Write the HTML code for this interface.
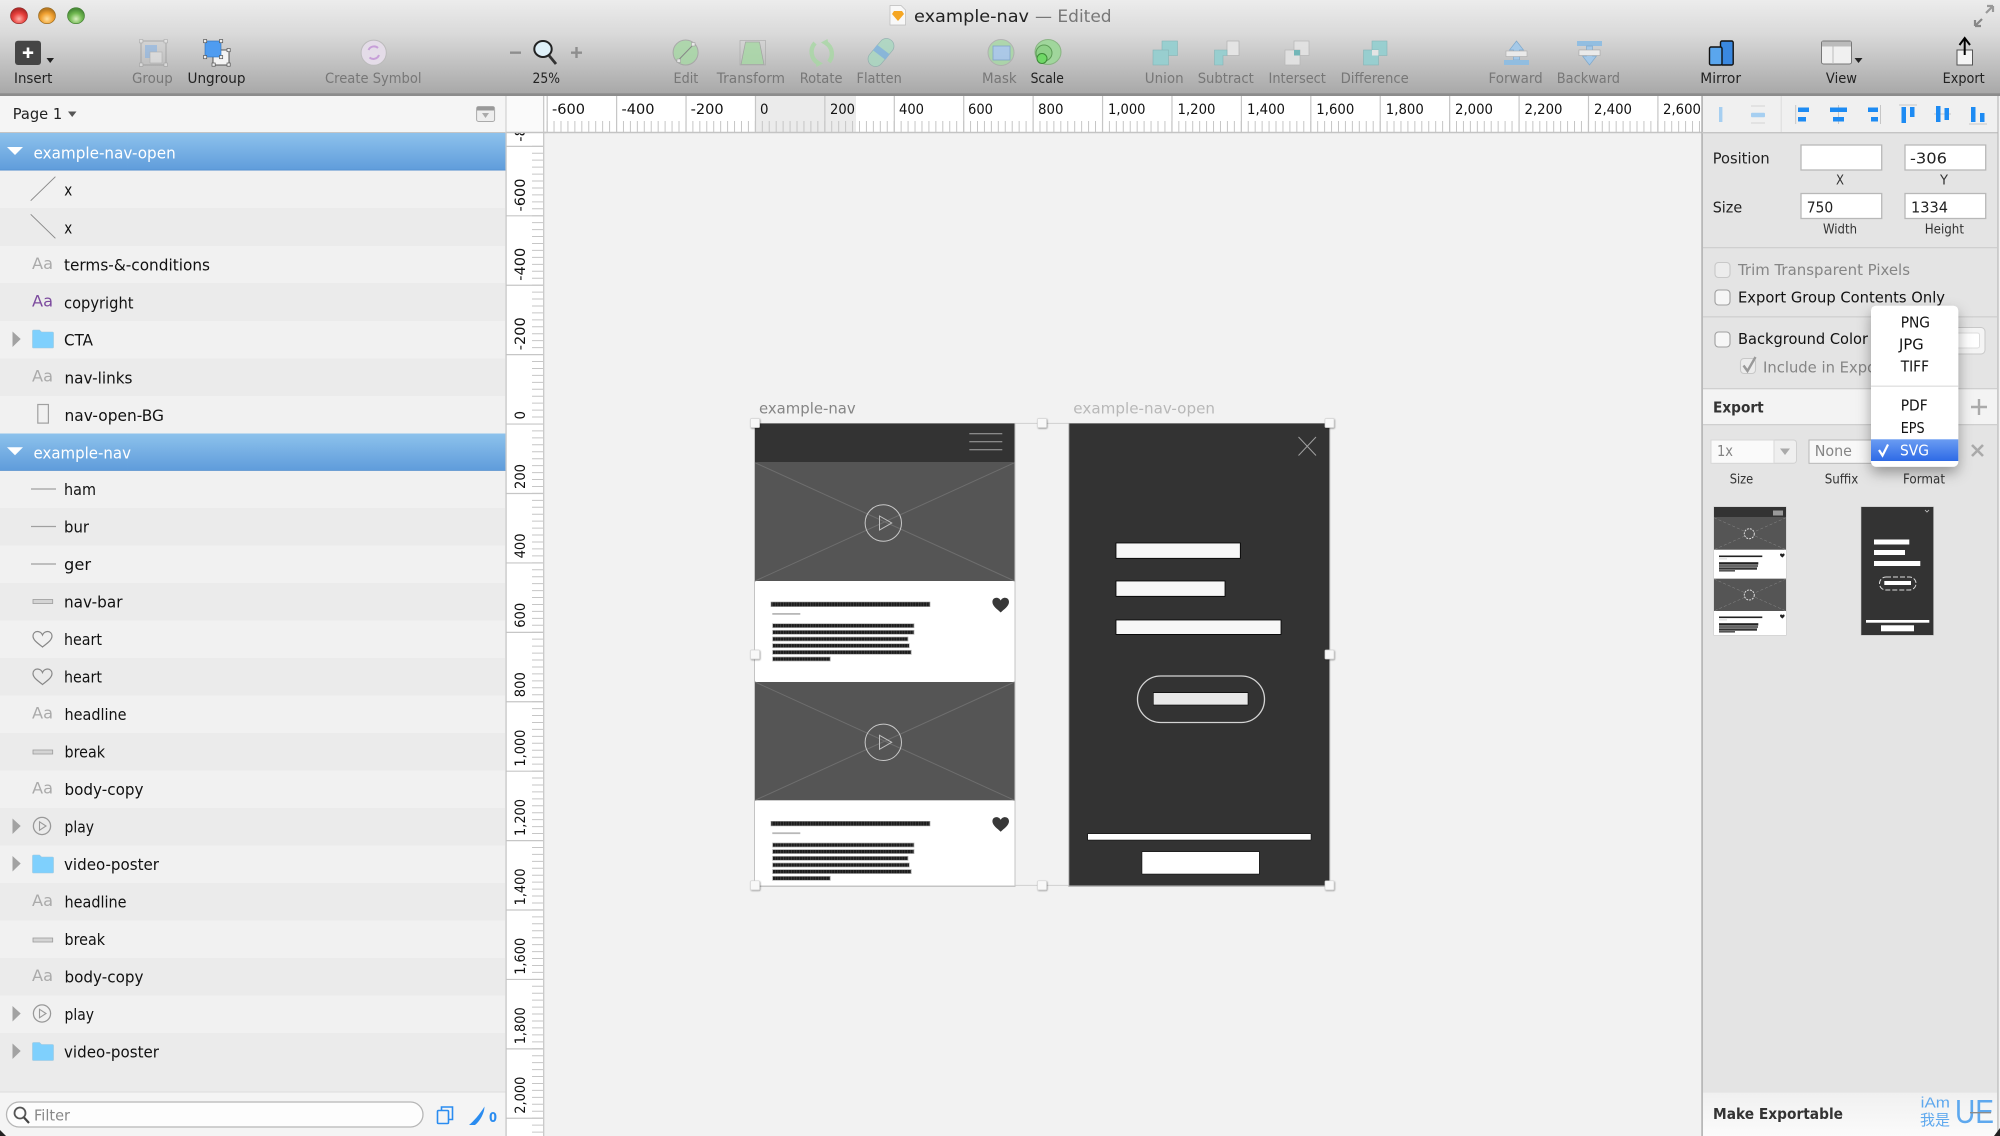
<!DOCTYPE html>
<html><head><meta charset="utf-8"><title>example-nav</title>
<style>
html,body{margin:0;padding:0;background:#f2f2f2;width:2000px;height:1136px;overflow:hidden}
svg{display:block;position:absolute;left:0;top:0;filter:blur(.35px)}
text{font-family:"DejaVu Sans","Liberation Sans",sans-serif;white-space:pre}
.l{font-size:16px;fill:#111}
.h{font-size:16px;fill:#fff}
.a{font-size:16px;fill:#aaa}
.tb{font-size:14px;fill:#777}
.te{font-size:14px;fill:#222}
.r{font-size:14px;fill:#111}
.p{font-size:15px;fill:#222}
.s{font-size:13px;fill:#333}
.g{font-size:15px;fill:#858585}
.b{font-size:15px;font-weight:bold;fill:#333}
.m{font-size:15px;fill:#111}
</style></head><body>
<svg xmlns="http://www.w3.org/2000/svg" width="2000" height="1136" viewBox="0 0 2000 1136">
<defs>
<linearGradient id="tbg" x1="0" y1="0" x2="0" y2="1"><stop offset="0" stop-color="#ececec"/><stop offset=".35" stop-color="#dadada"/><stop offset="1" stop-color="#a8a8a8"/></linearGradient>
<linearGradient id="hdr" x1="0" y1="0" x2="0" y2="1"><stop offset="0" stop-color="#8dc2ec"/><stop offset="1" stop-color="#5f9cdb"/></linearGradient>
<linearGradient id="sel" x1="0" y1="0" x2="0" y2="1"><stop offset="0" stop-color="#6a9cf2"/><stop offset="1" stop-color="#2e6ae6"/></linearGradient>
<linearGradient id="exp" x1="0" y1="0" x2="0" y2="1"><stop offset="0" stop-color="#f0f0f0"/><stop offset="1" stop-color="#fbfbfb"/></linearGradient>
<radialGradient id="rd" cx=".5" cy=".7" r=".6"><stop offset="0" stop-color="#ffb0a8"/><stop offset=".6" stop-color="#e8403c"/><stop offset="1" stop-color="#b42a28"/></radialGradient>
<radialGradient id="or" cx=".5" cy=".7" r=".6"><stop offset="0" stop-color="#ffe0a0"/><stop offset=".6" stop-color="#f0a030"/><stop offset="1" stop-color="#b87820"/></radialGradient>
<radialGradient id="gr" cx=".5" cy=".7" r=".6"><stop offset="0" stop-color="#d8f0c0"/><stop offset=".6" stop-color="#70b850"/><stop offset="1" stop-color="#4a8c38"/></radialGradient>
<filter id="ms" x="-30%" y="-20%" width="160%" height="150%"><feDropShadow dx="0" dy="6" stdDeviation="7" flood-color="#000" flood-opacity=".35"/></filter>
<filter id="hs" x="-50%" y="-50%" width="200%" height="200%"><feDropShadow dx=".6" dy=".8" stdDeviation=".9" flood-color="#000" flood-opacity=".4"/></filter>
<pattern id="st" width="2.7" height="6" patternUnits="userSpaceOnUse"><rect width="2.7" height="6" fill="#1c1c1c"/><rect width=".6" height="6" fill="#4c4c4c"/></pattern>
<path id="heart" d="M0 7.5C-3 4.5-8.3 1.2-8.3-3C-8.3-5.8-6.3-7.2-4.2-7.2C-2.2-7.2-.9-6-0-4.5C.9-6 2.2-7.2 4.2-7.2C6.3-7.2 8.3-5.8 8.3-3C8.3 1.2 3 4.5 0 7.5Z"/>
<g id="aa"><text class="a" x="32" y="0" textLength="21" lengthAdjust="spacingAndGlyphs">Aa</text></g>
<g id="fold"><path d="M32.5 11a1 1 0 0 1 1-1h6l2 2h11a1 1 0 0 1 1 1v14a1 1 0 0 1-1 1h-19a1 1 0 0 1-1-1z" fill="#7fd0fd" stroke="#9cc8e0" stroke-width=".6"/></g>
<path id="arr" d="M12.5 10.5L20.7 18L12.5 26Z" fill="#a2a2a2"/>
<g id="pl"><circle cx="42" cy="18" r="8.6" fill="none" stroke="#999" stroke-width="1.3"/><path d="M39.5 13.8L46 18L39.5 22.2Z" fill="none" stroke="#999" stroke-width="1.1"/></g>
<path id="hl" d="M42.5 26.5C40 24 33 20.5 33 15.5C33 12.8 35 11 37.3 11C39.4 11 41.6 12.3 42.5 14.5C43.4 12.3 45.6 11 47.7 11C50 11 52 12.8 52 15.5C52 20.5 45 24 42.5 26.5Z" fill="none" stroke="#888" stroke-width="1.2"/>
<rect id="hd" x="-4.5" y="-4.5" width="9" height="9" rx="1" fill="#f8f8f8" stroke="#d4d4d4" stroke-width=".7" filter="url(#hs)"/>
<g id="txt">
<rect x="771" y="602" width="159" height="4.6" fill="url(#st)" stroke="#999" stroke-width=".6"/>
<rect x="772.3" y="613" width="28" height="1.8" fill="#b8b8b8"/>
<g fill="url(#st)" stroke="#b0b0b0" stroke-width=".7">
<rect x="772.6" y="623.7" width="141.4" height="4"/>
<rect x="772.6" y="630.3" width="141.4" height="4"/>
<rect x="772.6" y="637" width="135.4" height="4"/>
<rect x="772.6" y="643.7" width="136.7" height="4"/>
<rect x="772.6" y="650.3" width="138.7" height="4"/>
<rect x="772.6" y="657" width="57.7" height="4"/>
</g>
<use href="#heart" x="1000.7" y="605" fill="#383838"/>
</g>
<g id="vid">
<rect x="755" y="462.7" width="259.5" height="118.3" fill="#555"/>
<path d="M755 462.7L1014.5 581M1014.5 462.7L755 581" stroke="#6e6e6e" stroke-width="1" fill="none"/>
<circle cx="883.3" cy="523" r="18.2" fill="#555" fill-opacity="0" stroke="#c8c8c8" stroke-width="1"/>
<path d="M879.5 516L891.7 523L879.5 530Z" fill="none" stroke="#c0c0c0" stroke-width="1"/>
</g>
<g id="tv">
<rect x="0" y="0" width="72" height="32" fill="#555"/>
<path d="M0 0L72 32M72 0L0 32" stroke="#888" stroke-width=".5" stroke-dasharray="3 2"/>
<circle cx="35.3" cy="16" r="5" fill="#555" stroke="#ddd" stroke-width="1" stroke-dasharray="2 1"/>
</g>
<g id="tw">
<rect x="5" y="5.5" width="43.3" height="1.6" fill="#222"/>
<rect x="5" y="8.5" width="8" height=".8" fill="#ccc"/>
<rect x="5" y="12.2" width="39.3" height="2.3" fill="#222"/>
<rect x="5" y="14.8" width="39" height="2.3" fill="#666"/>
<rect x="5" y="17.4" width="38" height="2.3" fill="#333"/>
<rect x="5" y="20" width="16" height="1.6" fill="#555"/>
<use href="#heart" transform="translate(68.3,5.5) scale(.28)" fill="#222"/>
</g>
</defs>

<!-- base -->
<rect width="2000" height="1136" fill="#f2f2f2"/>

<!-- horizontal ruler -->
<rect x="506" y="96" width="1196" height="37" fill="#fff"/>
<rect x="755" y="96" width="101" height="36" fill="#ebebeb"/>
<line x1="546.6" y1="126.5" x2="1701" y2="126.5" stroke="#c6c6c6" stroke-width="11" stroke-dasharray="1 5.942"/>
<line x1="546.6" y1="114" x2="1701" y2="114" stroke="#c6c6c6" stroke-width="36" stroke-dasharray="1.2 68.22"/>
<line x1="506" y1="132.5" x2="1702" y2="132.5" stroke="#c4c4c4" stroke-width="1.4"/>
<g>
<text class="r" x="552" y="114" textLength="33" lengthAdjust="spacingAndGlyphs">-600</text>
<text class="r" x="621.5" y="114" textLength="33" lengthAdjust="spacingAndGlyphs">-400</text>
<text class="r" x="690.7" y="114" textLength="33" lengthAdjust="spacingAndGlyphs">-200</text>
<text class="r" x="760" y="114" textLength="8.5" lengthAdjust="spacingAndGlyphs">0</text>
<text class="r" x="830" y="114" textLength="25" lengthAdjust="spacingAndGlyphs">200</text>
<text class="r" x="899" y="114" textLength="25" lengthAdjust="spacingAndGlyphs">400</text>
<text class="r" x="968" y="114" textLength="25" lengthAdjust="spacingAndGlyphs">600</text>
<text class="r" x="1038" y="114" textLength="25.5" lengthAdjust="spacingAndGlyphs">800</text>
<text class="r" x="1108" y="114" textLength="37.5" lengthAdjust="spacingAndGlyphs">1,000</text>
<text class="r" x="1177.5" y="114" textLength="38" lengthAdjust="spacingAndGlyphs">1,200</text>
<text class="r" x="1247" y="114" textLength="38" lengthAdjust="spacingAndGlyphs">1,400</text>
<text class="r" x="1316.3" y="114" textLength="38" lengthAdjust="spacingAndGlyphs">1,600</text>
<text class="r" x="1385.8" y="114" textLength="38" lengthAdjust="spacingAndGlyphs">1,800</text>
<text class="r" x="1455" y="114" textLength="38" lengthAdjust="spacingAndGlyphs">2,000</text>
<text class="r" x="1524.5" y="114" textLength="38" lengthAdjust="spacingAndGlyphs">2,200</text>
<text class="r" x="1594" y="114" textLength="38" lengthAdjust="spacingAndGlyphs">2,400</text>
<text class="r" x="1663" y="114" textLength="38" lengthAdjust="spacingAndGlyphs">2,600</text>
</g>

<!-- vertical ruler -->
<rect x="506" y="133" width="37.5" height="1003" fill="#fff"/>
<line x1="537.5" y1="145.8" x2="537.5" y2="1136" stroke="#c6c6c6" stroke-width="11" stroke-dasharray="1 5.942"/>
<line x1="524.5" y1="145.8" x2="524.5" y2="1136" stroke="#c6c6c6" stroke-width="37" stroke-dasharray="1.2 68.22"/>
<line x1="543.7" y1="133" x2="543.7" y2="1136" stroke="#c4c4c4" stroke-width="1.2"/>
<line x1="506" y1="133" x2="506" y2="1136" stroke="#c4c4c4" stroke-width="1.4"/>
<text class="r" transform="translate(525,141.8) rotate(-90)" textLength="33" lengthAdjust="spacingAndGlyphs">-800</text>
<text class="r" transform="translate(525,211.5) rotate(-90)" textLength="33" lengthAdjust="spacingAndGlyphs">-600</text>
<text class="r" transform="translate(525,280.8) rotate(-90)" textLength="33" lengthAdjust="spacingAndGlyphs">-400</text>
<text class="r" transform="translate(525,350.2) rotate(-90)" textLength="33" lengthAdjust="spacingAndGlyphs">-200</text>
<text class="r" transform="translate(525,419.5) rotate(-90)" textLength="8.5" lengthAdjust="spacingAndGlyphs">0</text>
<text class="r" transform="translate(525,489) rotate(-90)" textLength="25" lengthAdjust="spacingAndGlyphs">200</text>
<text class="r" transform="translate(525,558.4) rotate(-90)" textLength="25" lengthAdjust="spacingAndGlyphs">400</text>
<text class="r" transform="translate(525,627.8) rotate(-90)" textLength="25" lengthAdjust="spacingAndGlyphs">600</text>
<text class="r" transform="translate(525,697.2) rotate(-90)" textLength="25" lengthAdjust="spacingAndGlyphs">800</text>
<text class="r" transform="translate(525,766.6) rotate(-90)" textLength="37" lengthAdjust="spacingAndGlyphs">1,000</text>
<text class="r" transform="translate(525,836) rotate(-90)" textLength="37" lengthAdjust="spacingAndGlyphs">1,200</text>
<text class="r" transform="translate(525,905.4) rotate(-90)" textLength="37" lengthAdjust="spacingAndGlyphs">1,400</text>
<text class="r" transform="translate(525,974.8) rotate(-90)" textLength="37" lengthAdjust="spacingAndGlyphs">1,600</text>
<text class="r" transform="translate(525,1044.3) rotate(-90)" textLength="37" lengthAdjust="spacingAndGlyphs">1,800</text>
<text class="r" transform="translate(525,1113.7) rotate(-90)" textLength="37" lengthAdjust="spacingAndGlyphs">2,000</text>
<!-- top-left ruler corner covers the clipped -800 label -->
<rect x="506.7" y="96" width="36.5" height="36.3" fill="#fafafa"/>
<line x1="506" y1="132.5" x2="546" y2="132.5" stroke="#c4c4c4" stroke-width="1.4"/>
<line x1="543.7" y1="96" x2="543.7" y2="133" stroke="#c4c4c4" stroke-width="1.2"/>

<!-- artboards -->
<text class="g" x="759" y="413.3" textLength="96.7" lengthAdjust="spacingAndGlyphs">example-nav</text>
<text class="g" x="1073.3" y="413.3" textLength="141.7" lengthAdjust="spacingAndGlyphs" style="fill:#b8b8b8">example-nav-open</text>
<path d="M1014 423.4H1070M1014 885.4H1070" stroke="#cfcfcf" stroke-width="1"/>
<rect x="754" y="423" width="261.5" height="464" fill="#c4c4c4"/>
<rect x="755" y="423.5" width="259.5" height="462" fill="#fff"/>
<rect x="755" y="423.5" width="259.5" height="39.2" fill="#333"/>
<path d="M969.3 433.7H1002.3M969.3 441.7H1002.3M969.3 449.7H1002.3" stroke="#a4a4a4" stroke-width="1"/>
<use href="#vid"/>
<use href="#vid" y="219.3"/>
<use href="#txt"/>
<use href="#txt" y="219.3"/>

<rect x="1068.3" y="423" width="262" height="464" fill="#bcbcbc"/>
<rect x="1069.3" y="423.5" width="260" height="462" fill="#333"/>
<path d="M1298.5 437L1316 455.5M1316 437L1298.5 455.5" stroke="#a0a0a0" stroke-width="1" fill="none"/>
<g fill="#f7f7f7" stroke="#000" stroke-width=".8">
<rect x="1116" y="543" width="124.3" height="15.3"/>
<rect x="1116" y="581" width="109" height="15.3"/>
<rect x="1116" y="620" width="165" height="14.4"/>
</g>
<rect x="1137.5" y="676" width="127" height="46.5" rx="23.2" fill="none" stroke="#d4d4d4" stroke-width="1.3"/>
<rect x="1153.3" y="692.7" width="94.7" height="12.3" fill="#e8e8e8" stroke="#000" stroke-width=".6"/>
<rect x="1087.7" y="833.7" width="223.3" height="6.3" fill="#fff" stroke="#000" stroke-width=".5"/>
<rect x="1142" y="851.7" width="117.3" height="22.3" fill="#fff" stroke="#000" stroke-width=".5"/>
<use href="#hd" x="755" y="423"/><use href="#hd" x="1042" y="423"/><use href="#hd" x="1329.5" y="423"/>
<use href="#hd" x="755" y="654.5"/><use href="#hd" x="1329.5" y="654.5"/>
<use href="#hd" x="755" y="885.3"/><use href="#hd" x="1042" y="885.3"/><use href="#hd" x="1329.5" y="885.3"/>

<!-- layers panel -->
<rect x="0" y="96" width="505.4" height="37" fill="#f5f5f5"/>
<line x1="506" y1="96" x2="506" y2="133" stroke="#c9c9c9" stroke-width="1"/>
<text class="p" x="12.7" y="119" textLength="49.5" lengthAdjust="spacingAndGlyphs">Page 1</text>
<path d="M68 111.5H76.5L72.2 117Z" fill="#555"/>
<rect x="476.6" y="106.5" width="18" height="15" rx="2" fill="#eee" stroke="#aaa"/>
<rect x="477" y="107" width="17" height="3.5" fill="#999"/>
<path d="M482 113H489L485.5 118Z" fill="#aaa"/>
<rect x="0" y="132" width="505.4" height="1" fill="#c4c4c4"/>
<rect x="0" y="133" width="505.4" height="959" fill="#f1f1f1"/>
<g fill="#ebebeb">
<rect y="208" width="505.4" height="38"/><rect y="283" width="505.4" height="38"/><rect y="358.5" width="505.4" height="37.5"/>
<rect y="508" width="505.4" height="37.5"/><rect y="583" width="505.4" height="37.5"/><rect y="658" width="505.4" height="37.5"/><rect y="733" width="505.4" height="37.5"/><rect y="808" width="505.4" height="37.5"/><rect y="883" width="505.4" height="37.5"/><rect y="958" width="505.4" height="37.5"/><rect y="1033" width="505.4" height="59"/>
</g>
<rect y="133" width="505.4" height="37.5" fill="url(#hdr)"/>
<rect y="433.5" width="505.4" height="37" fill="url(#hdr)"/>
<rect y="169.7" width="505.4" height=".8" fill="#4f8ccd"/><rect y="470" width="505.4" height=".8" fill="#4f8ccd"/>
<path d="M7 147H23L15 155Z" fill="#fff"/><path d="M7 447.2H23L15 455.2Z" fill="#fff"/>
<text class="h" x="33.5" y="158.5" textLength="142.2" lengthAdjust="spacingAndGlyphs">example-nav-open</text>
<text class="h" x="33.5" y="458.4" textLength="97.5" lengthAdjust="spacingAndGlyphs">example-nav</text>

<!-- rows group 1 -->
<path d="M30.7 200.7L55.4 176.7M30.7 214.3L55.4 238.3" stroke="#8a8a8a" stroke-width="1" fill="none"/>
<text class="l" x="64.3" y="195.7" textLength="8" lengthAdjust="spacingAndGlyphs">x</text>
<text class="l" x="64.3" y="233.3" textLength="8" lengthAdjust="spacingAndGlyphs">x</text>
<use href="#aa" y="269"/><text class="l" x="64" y="270.5" textLength="146" lengthAdjust="spacingAndGlyphs">terms-&amp;-conditions</text>
<text x="32" y="306.5" font-size="16" fill="#7c4a9e" textLength="21" lengthAdjust="spacingAndGlyphs">Aa</text><text class="l" x="64" y="308.3" textLength="69.5" lengthAdjust="spacingAndGlyphs">copyright</text>
<use href="#arr" y="321"/><use href="#fold" y="320"/><text class="l" x="64" y="345.5" textLength="29" lengthAdjust="spacingAndGlyphs">CTA</text>
<use href="#aa" y="381.5"/><text class="l" x="64.5" y="383.4" textLength="68" lengthAdjust="spacingAndGlyphs">nav-links</text>
<rect x="37.8" y="404.5" width="10.6" height="18.6" fill="none" stroke="#a0a0a0" stroke-width="1.2"/><text class="l" x="64.5" y="420.9" textLength="99.5" lengthAdjust="spacingAndGlyphs">nav-open-BG</text>

<!-- rows group 2 -->
<path d="M31 489H56M31 526.5H56M31 564H56" stroke="#a0a0a0" stroke-width="1.2" fill="none"/>
<text class="l" x="64" y="495.2" textLength="32" lengthAdjust="spacingAndGlyphs">ham</text>
<text class="l" x="64" y="532.7" textLength="25" lengthAdjust="spacingAndGlyphs">bur</text>
<text class="l" x="64" y="570.2" textLength="27" lengthAdjust="spacingAndGlyphs">ger</text>
<rect x="33" y="599.5" width="19.7" height="4" fill="#d4d4d4" stroke="#9c9c9c" stroke-width=".8"/>
<text class="l" x="64" y="607.7" textLength="58.5" lengthAdjust="spacingAndGlyphs">nav-bar</text>
<use href="#hl" y="620.5"/><text class="l" x="64" y="645.2" textLength="38" lengthAdjust="spacingAndGlyphs">heart</text>
<use href="#hl" y="658"/><text class="l" x="64" y="682.7" textLength="38" lengthAdjust="spacingAndGlyphs">heart</text>
<use href="#aa" y="718.5"/><text class="l" x="64.5" y="720.2" textLength="62" lengthAdjust="spacingAndGlyphs">headline</text>
<rect x="33" y="750" width="19.7" height="4" fill="#d4d4d4" stroke="#9c9c9c" stroke-width=".8"/>
<text class="l" x="64.5" y="757.7" textLength="40.5" lengthAdjust="spacingAndGlyphs">break</text>
<use href="#aa" y="793.5"/><text class="l" x="64.5" y="795.2" textLength="79" lengthAdjust="spacingAndGlyphs">body-copy</text>
<use href="#arr" y="808"/><use href="#pl" y="808"/><text class="l" x="64.5" y="832.7" textLength="29.5" lengthAdjust="spacingAndGlyphs">play</text>
<use href="#arr" y="845.5"/><use href="#fold" y="845"/><text class="l" x="64" y="870.2" textLength="95" lengthAdjust="spacingAndGlyphs">video-poster</text>
<use href="#aa" y="906"/><text class="l" x="64.5" y="907.7" textLength="62" lengthAdjust="spacingAndGlyphs">headline</text>
<rect x="33" y="938" width="19.7" height="4" fill="#d4d4d4" stroke="#9c9c9c" stroke-width=".8"/>
<text class="l" x="64.5" y="945.2" textLength="40.5" lengthAdjust="spacingAndGlyphs">break</text>
<use href="#aa" y="981"/><text class="l" x="64.5" y="982.7" textLength="79" lengthAdjust="spacingAndGlyphs">body-copy</text>
<use href="#arr" y="995.5"/><use href="#pl" y="995.5"/><text class="l" x="64.5" y="1020.2" textLength="29.5" lengthAdjust="spacingAndGlyphs">play</text>
<use href="#arr" y="1033"/><use href="#fold" y="1032.5"/><text class="l" x="64" y="1057.7" textLength="95" lengthAdjust="spacingAndGlyphs">video-poster</text>

<!-- filter bar -->
<rect x="0" y="1092" width="505.4" height="44" fill="#f4f4f4"/>
<rect x="0" y="1091.5" width="505.4" height="1" fill="#dcdcdc"/>
<rect x="6.5" y="1102" width="416.5" height="25" rx="12.5" fill="#fdfdfd" stroke="#b6b6b6" stroke-width="1.3"/>
<circle cx="20" cy="1113" r="5.5" fill="none" stroke="#555" stroke-width="1.8"/>
<path d="M24 1117.5L29 1123" stroke="#444" stroke-width="2.2"/>
<text x="34" y="1120.7" font-size="15" fill="#888" textLength="36" lengthAdjust="spacingAndGlyphs">Filter</text>
<rect x="437.5" y="1110.5" width="11" height="13" rx="1" fill="none" stroke="#2a8cf0" stroke-width="1.6"/>
<path d="M441.5 1110V1107H452.5V1119.5H449" fill="none" stroke="#2a8cf0" stroke-width="1.6"/>
<path d="M469 1125C473 1122 480 1114 484.5 1106.5C484.5 1113 480 1121 475 1125Z" fill="#2a8cf0"/>
<text x="489" y="1122" font-size="13" font-weight="bold" fill="#2a8cf0" textLength="8" lengthAdjust="spacingAndGlyphs">0</text>
<path d="M0 1136V1130L6 1136Z" fill="#222"/>

<!-- right panel -->
<rect x="1702" y="96" width="298" height="1040" fill="#e4e4e4"/>
<rect x="1702" y="96" width="298" height="36.5" fill="#f0f0f0"/>
<rect x="1701.2" y="96" width="1.8" height="1040" fill="#b8b8b8"/>
<rect x="1702" y="132" width="296" height="1.4" fill="#c4c4c4"/>
<rect x="1780.7" y="96" width="1" height="36" fill="#dcdcdc"/>
<rect x="1997.5" y="96" width="1" height="1040" fill="#b0b0b0"/>
<rect x="1998.5" y="96" width="1.5" height="1040" fill="#f2f2f2"/>

<!-- align icons -->
<rect x="1719" y="107" width="3.4" height="15" fill="#a6cff1"/>
<path d="M1751 106H1765M1751 123H1765" stroke="#d4d4d4" stroke-width="1"/>
<rect x="1751" y="112.7" width="14" height="4.5" rx="1" fill="#a6cff1"/>
<g stroke="#c6c6c6" stroke-width="1" fill="none">
<path d="M1795.7 105V124M1838.5 105V124M1880.5 105V124M1899 105H1917M1934 114H1951M1969 124H1987"/>
</g>
<g fill="#1d8bf3">
<rect x="1798" y="107.5" width="11" height="4.5"/><rect x="1798" y="117" width="8" height="4.5"/>
<rect x="1830" y="107.5" width="17" height="4.5"/><rect x="1833" y="117" width="11" height="4.5"/>
<rect x="1868" y="107.5" width="10" height="4.5"/><rect x="1871" y="117" width="7" height="4.5"/>
<rect x="1901.5" y="107" width="4.5" height="16"/><rect x="1910" y="107" width="4.5" height="10"/>
<rect x="1936" y="106" width="4.5" height="16"/><rect x="1944.5" y="108" width="4.5" height="12"/>
<rect x="1971" y="107" width="4.5" height="15"/><rect x="1980" y="113" width="4.5" height="9"/>
</g>

<text class="p" x="1712.7" y="163.3" textLength="57" lengthAdjust="spacingAndGlyphs">Position</text>
<text class="p" x="1712.7" y="212.3" textLength="29.5" lengthAdjust="spacingAndGlyphs">Size</text>
<g fill="#fff" stroke="#b8b8b8" stroke-width="1.3">
<rect x="1801" y="145" width="80.7" height="25"/><rect x="1905" y="145" width="80.7" height="25"/>
<rect x="1801" y="193.5" width="80.7" height="25"/><rect x="1905" y="193.5" width="80.7" height="25"/>
</g>
<text class="p" x="1910" y="163.3" textLength="37" lengthAdjust="spacingAndGlyphs">-306</text>
<text class="p" x="1806.7" y="212.3" textLength="26.6" lengthAdjust="spacingAndGlyphs">750</text>
<text class="p" x="1911" y="212.3" textLength="37" lengthAdjust="spacingAndGlyphs">1334</text>
<text class="s" x="1836" y="184.7" textLength="8" lengthAdjust="spacingAndGlyphs">X</text>
<text class="s" x="1940" y="184.7" textLength="8" lengthAdjust="spacingAndGlyphs">Y</text>
<text class="s" x="1823" y="233.7" textLength="34" lengthAdjust="spacingAndGlyphs">Width</text>
<text class="s" x="1924.7" y="233.7" textLength="39.3" lengthAdjust="spacingAndGlyphs">Height</text>
<rect x="1703" y="247" width="294" height="1.3" fill="#cfcfcf"/>
<rect x="1715" y="262.5" width="15" height="15" rx="3.5" fill="#ececec" stroke="#c8c8c8" stroke-width="1.1"/>
<text class="g" x="1738" y="275" textLength="172" lengthAdjust="spacingAndGlyphs">Trim Transparent Pixels</text>
<rect x="1715" y="290" width="15" height="15" rx="3.5" fill="#f6f6f6" stroke="#a0a0a0" stroke-width="1.1"/>
<text class="p" x="1738" y="302.3" textLength="207" lengthAdjust="spacingAndGlyphs" style="fill:#111">Export Group Contents Only</text>
<rect x="1703" y="316.2" width="294" height="1.3" fill="#cfcfcf"/>
<rect x="1715" y="332" width="15" height="15" rx="3.5" fill="#f6f6f6" stroke="#a0a0a0" stroke-width="1.1"/>
<text class="p" x="1738" y="344" textLength="130" lengthAdjust="spacingAndGlyphs" style="fill:#111">Background Color</text>
<rect x="1950" y="327.5" width="35" height="26.5" rx="4" fill="#f4f4f4" stroke="#c8c8c8"/>
<rect x="1950" y="333" width="29.5" height="15" rx="2" fill="#fff" stroke="#ddd"/>
<rect x="1740.5" y="358.5" width="15" height="15" rx="3.5" fill="#ececec" stroke="#c8c8c8" stroke-width="1.1"/>
<path d="M1743.5 365.5L1747.5 371L1755.5 357" fill="none" stroke="#999" stroke-width="2.4"/>
<text class="g" x="1763" y="372.3" textLength="125" lengthAdjust="spacingAndGlyphs">Include in Export</text>
<rect x="1703" y="388.7" width="294" height="36" fill="#f3f3f3"/>
<rect x="1703" y="388" width="294" height="1.3" fill="#cfcfcf"/>
<rect x="1703" y="424" width="294" height="1.3" fill="#cfcfcf"/>
<text class="b" x="1713" y="412.3" textLength="50.7" lengthAdjust="spacingAndGlyphs">Export</text>
<path d="M1979 399V415M1971 407H1987" stroke="#aaa" stroke-width="2.4"/>

<rect x="1711" y="440" width="85.5" height="23.3" rx="3" fill="#efefef" stroke="#d0d0d0"/>
<rect x="1711" y="440" width="63" height="23.3" fill="#fafafa" stroke="#d8d8d8"/>
<path d="M1780 448.5H1790L1785 455Z" fill="#aaa"/>
<text class="g" x="1717" y="456" textLength="16" lengthAdjust="spacingAndGlyphs">1x</text>
<rect x="1809" y="440" width="80" height="23.3" fill="#f8f8f8" stroke="#b8b8b8"/>
<text class="g" x="1814.7" y="456" textLength="37.3" lengthAdjust="spacingAndGlyphs">None</text>
<path d="M1972 445L1983 456M1983 445L1972 456" stroke="#aaa" stroke-width="2.6"/>
<text class="s" x="1729.7" y="483.3" textLength="23.5" lengthAdjust="spacingAndGlyphs">Size</text>
<text class="s" x="1824.7" y="483.3" textLength="33.6" lengthAdjust="spacingAndGlyphs">Suffix</text>
<text class="s" x="1903" y="483.3" textLength="42" lengthAdjust="spacingAndGlyphs">Format</text>

<!-- thumbs -->
<rect x="1713.5" y="506.5" width="73" height="129" fill="#c8c8c8"/>
<rect x="1714" y="507" width="72" height="128" fill="#fff"/>
<rect x="1714" y="507" width="72" height="10.7" fill="#333"/>
<rect x="1773" y="510.5" width="10" height="5" fill="#999"/>
<use href="#tv" x="1714" y="517.7"/>
<use href="#tw" x="1714" y="550"/>
<rect x="1714" y="578.3" width="72" height="1" fill="#aaa"/>
<use href="#tv" x="1714" y="579"/>
<use href="#tw" x="1714" y="611"/>
<rect x="1860.8" y="506.5" width="73" height="129" fill="#bbb"/>
<rect x="1861.3" y="507" width="72" height="128" fill="#333"/>
<path d="M1925 510L1927 512L1929 510" stroke="#ccc" fill="none" stroke-width=".8"/>
<g fill="#fff">
<rect x="1874" y="539.5" width="35.3" height="5"/><rect x="1874" y="550" width="31" height="5"/><rect x="1874" y="561" width="46.3" height="5"/>
<rect x="1884.3" y="581" width="26.7" height="4"/>
<rect x="1866" y="620" width="63.3" height="2.7"/><rect x="1881" y="625.3" width="33" height="6"/>
</g>
<rect x="1879.5" y="577" width="36.5" height="13" rx="6.5" fill="none" stroke="#ddd" stroke-dasharray="5 2"/>

<!-- menu -->
<rect x="1871" y="305.7" width="87.3" height="161" rx="5" fill="#fff" filter="url(#ms)"/>
<text class="m" x="1900.7" y="327.3" textLength="29.3" lengthAdjust="spacingAndGlyphs">PNG</text>
<text class="m" x="1899" y="349.3" textLength="24.6" lengthAdjust="spacingAndGlyphs">JPG</text>
<text class="m" x="1900.7" y="371.7" textLength="28.3" lengthAdjust="spacingAndGlyphs">TIFF</text>
<rect x="1871" y="385.5" width="87.3" height="1.4" fill="#e2e2e2"/>
<text class="m" x="1900.7" y="410.7" textLength="27" lengthAdjust="spacingAndGlyphs">PDF</text>
<text class="m" x="1900.7" y="433" textLength="24" lengthAdjust="spacingAndGlyphs">EPS</text>
<rect x="1871" y="439.3" width="87.3" height="21.7" fill="url(#sel)"/>
<path d="M1879 450L1882.5 455.5L1888 444.5" fill="none" stroke="#fff" stroke-width="2.2"/>
<text class="m" x="1900" y="455.3" textLength="29" lengthAdjust="spacingAndGlyphs" style="fill:#fff">SVG</text>

<!-- make exportable -->
<rect x="1703" y="1092.7" width="294" height="43.3" fill="url(#exp)"/>
<text class="b" x="1713" y="1119" textLength="130" lengthAdjust="spacingAndGlyphs">Make Exportable</text>
<text x="1920.7" y="1107.7" font-size="15" fill="#5ea8ee" textLength="29.3" lengthAdjust="spacingAndGlyphs" style="font-family:'Liberation Sans',sans-serif">iAm</text>
<text x="1920" y="1125" font-size="15" fill="#5ea8ee" style="font-family:'Liberation Sans','Noto Sans CJK SC',sans-serif">我是</text>
<text x="1955" y="1123" font-size="33" fill="#5ea8ee" textLength="39" lengthAdjust="spacingAndGlyphs" style="font-family:'Liberation Sans',sans-serif">UE</text>
<path d="M1970 1112.7H1991" stroke="#8a8a8a" stroke-width="1.4"/>
<path d="M2000 1136V1128L1994 1136Z" fill="#222"/>

<!-- toolbar -->
<rect x="0" y="0" width="2000" height="93.5" fill="url(#tbg)"/>
<rect x="0" y="93.3" width="2000" height="2.7" fill="#8c8c8c"/>
<ellipse cx="19" cy="15.7" rx="8.5" ry="8" fill="url(#rd)" stroke="#8a2a28" stroke-width=".6"/>
<ellipse cx="47" cy="15.7" rx="8.5" ry="8" fill="url(#or)" stroke="#92651c" stroke-width=".6"/>
<ellipse cx="76" cy="15.7" rx="8.5" ry="8" fill="url(#gr)" stroke="#3d7a2e" stroke-width=".6"/>

<!-- title -->
<path d="M890 5.5H901L905.5 10V25H890Z" fill="#f8f8f8" stroke="#bbb" stroke-width=".7"/>
<path d="M894 11H902L904 14L898 21L892 14Z" fill="#f5a623"/>
<text x="914" y="22" font-size="17" fill="#222" textLength="115" lengthAdjust="spacingAndGlyphs">example-nav</text>
<text x="1035" y="22" font-size="17" fill="#777" textLength="76.6" lengthAdjust="spacingAndGlyphs">— Edited</text>
<path d="M1975 26L1982 19M1975 26V20M1975 26H1981" stroke="#888" stroke-width="2.2" fill="none"/>
<path d="M1993 6L1986 13M1993 6V12M1993 6H1987" stroke="#999" stroke-width="2.2" fill="none"/>

<!-- insert -->
<rect x="15" y="40.7" width="26" height="24.3" rx="3" fill="#454545"/>
<path d="M28 47.5V58M22.8 52.7H33.2" stroke="#fff" stroke-width="2.6"/>
<path d="M46.5 58H54L50.2 63Z" fill="#222"/>

<!-- group -->
<g opacity=".55">
<rect x="141" y="41" width="25" height="24" fill="none" stroke="#888"/>
<rect x="145" y="45" width="12" height="13" fill="#7fb0e8"/>
<rect x="150" y="52" width="12" height="11" fill="#e8e8e8" stroke="#999" stroke-width=".6"/>
<g fill="#eee" stroke="#888" stroke-width=".6"><rect x="139.5" y="39.5" width="3.4" height="3.4"/><rect x="164" y="39.5" width="3.4" height="3.4"/><rect x="139.5" y="63" width="3.4" height="3.4"/><rect x="164" y="63" width="3.4" height="3.4"/></g>
</g>
<!-- ungroup -->
<rect x="213" y="50" width="16" height="15" fill="#f4f4f4" stroke="#333" stroke-width=".8"/>
<rect x="205" y="41" width="16" height="16" fill="#4f9cf0" stroke="#2d6db5" stroke-width=".6"/>
<g fill="#eee" stroke="#555" stroke-width=".7"><rect x="203.5" y="39.5" width="3.2" height="3.2"/><rect x="219.5" y="39.5" width="3.2" height="3.2"/><rect x="203.5" y="55.5" width="3.2" height="3.2"/><rect x="219.5" y="55.5" width="3.2" height="3.2"/><rect x="227" y="48.5" width="3.2" height="3.2"/><rect x="212" y="63" width="3.2" height="3.2"/><rect x="227" y="63" width="3.2" height="3.2"/></g>
<!-- create symbol -->
<circle cx="373.7" cy="52.7" r="12.6" fill="#e4dce8" stroke="#bbb" stroke-width="1"/>
<path d="M368.5 50A6 6 0 0 1 378 48M379 55A6 6 0 0 1 369.5 57.5" fill="none" stroke="#c79fd8" stroke-width="2"/>

<!-- zoom -->
<path d="M510 52.7H521M571 52.7H582M576.5 47V58" stroke="#8e8e8e" stroke-width="2.4"/>
<ellipse cx="543" cy="49" rx="8.7" ry="8" fill="#dff0f8" stroke="#222" stroke-width="2"/>
<path d="M549 55.5L556 64" stroke="#333" stroke-width="2.8"/>

<!-- edit -->
<g opacity=".8">
<circle cx="685.6" cy="52.5" r="12.5" fill="#a6d8a4" stroke="#a0a0a0"/>
<path d="M678.5 60L693 45" stroke="#777" stroke-width="1"/>
<rect x="691.5" y="42.5" width="3.5" height="3.5" fill="#eee" stroke="#888" stroke-width=".5"/><rect x="677" y="59" width="3.5" height="3.5" fill="#eee" stroke="#888" stroke-width=".5"/>
<!-- transform -->
<path d="M745.5 42H759.5L764 64.5H741Z" fill="#a6d8a4" stroke="#999" stroke-width=".7"/>
<rect x="740" y="40.5" width="25.5" height="24.5" fill="none" stroke="#aaa" stroke-width=".8"/>
<!-- rotate -->
<path d="M815 43A13 13 0 0 0 818 63" fill="none" stroke="#a8d8a4" stroke-width="4.4"/>
<path d="M829 62A13 13 0 0 0 826 43" fill="none" stroke="#a8d8a4" stroke-width="4.4"/>
<path d="M815 58.5L823 63.5L816.5 67Z" fill="#a8d8a4"/>
<path d="M829 47.5L821 42.5L827.5 39Z" fill="#a8d8a4"/>
<!-- flatten -->
<rect x="865" y="45" width="32" height="15" rx="7.5" transform="rotate(-50 881 52.5)" fill="#a8d8c0" stroke="#8aa" stroke-width=".7"/>
<path d="M875 47.5L887.5 57" stroke="#7ab2dc" stroke-width="7"/>
</g>
<!-- mask -->
<g opacity=".8">
<circle cx="1001" cy="52.5" r="13" fill="#a6d8a4" stroke="#aaa"/>
<rect x="993" y="46" width="17" height="14" fill="#a4c8ee" stroke="#6f9cc8" stroke-width=".8"/>
</g>
<!-- scale -->
<ellipse cx="1048" cy="52" rx="13" ry="12.5" fill="#a0d69c" stroke="#8ab484"/>
<circle cx="1044" cy="53" r="8" fill="#8fd089" stroke="#5e9c58" stroke-width="1"/>
<circle cx="1042" cy="58.5" r="5" fill="#6fd866" stroke="#3b8a35" stroke-width="1"/>

<!-- boolean -->
<g opacity=".95">
<g fill="#96cfd0" stroke="#82b4b6" stroke-width=".6"><rect x="1162" y="41" width="15.5" height="14.5"/><rect x="1153" y="50" width="15.5" height="15"/></g>
<rect x="1227" y="41" width="12" height="14.5" fill="#e6e6e6" stroke="#b0b0b0" stroke-width=".7"/>
<path d="M1214.5 50H1227V55.5H1223V65H1214.5Z" fill="#96cfd0" stroke="#82b4b6" stroke-width=".6"/>
<g fill="#e2e2e2" stroke="#b6b6b6" stroke-width=".7"><rect x="1294" y="41" width="15" height="14.5"/><rect x="1285" y="50" width="15" height="15"/></g>
<rect x="1294" y="50" width="6" height="5.5" fill="#6fb6b8"/>
<g fill="#96cfd0" stroke="#82b4b6" stroke-width=".6"><rect x="1372" y="41" width="15" height="14.5"/><rect x="1363.5" y="50" width="15" height="15"/></g>
<rect x="1372" y="50" width="6.5" height="5.5" fill="#e6e6e6"/>
</g>
<!-- forward / backward -->
<g opacity=".95">
<path d="M1516.5 41L1523.5 50H1519.5V60H1513.5V50H1509.5Z" fill="#a3c9ea" stroke="#7ba7cc" stroke-width=".7"/>
<rect x="1506" y="51" width="21" height="5.5" fill="#ececec" stroke="#aaa" stroke-width=".6"/>
<rect x="1504" y="60" width="25" height="5" fill="#8fbde2"/>
<rect x="1577" y="41" width="25" height="5" fill="#8fbde2"/>
<rect x="1579" y="50" width="21" height="5.5" fill="#ececec" stroke="#aaa" stroke-width=".6"/>
<path d="M1589.5 65L1582.5 56H1586.5V46H1592.5V56H1596.5Z" fill="#a3c9ea" stroke="#7ba7cc" stroke-width=".7"/>
<rect x="1579" y="50" width="21" height="5.5" fill="#ececec" stroke="#aaa" stroke-width=".6"/>
</g>
<!-- mirror -->
<rect x="1720.5" y="41" width="12.7" height="24" rx="1.5" fill="#3a88e0" stroke="#111" stroke-width="1.4"/>
<rect x="1709.5" y="47" width="12.5" height="18" rx="1.5" fill="#5aa6ee" stroke="#111" stroke-width="1.4"/>
<!-- view -->
<rect x="1821.5" y="41" width="30" height="23" rx="2" fill="#f0f0f0" stroke="#777"/>
<rect x="1822" y="41.5" width="29" height="5" fill="#bbb"/>
<path d="M1833 46.5V64" stroke="#bbb"/>
<path d="M1854.5 58H1862.5L1858.5 63Z" fill="#222"/>
<!-- export -->
<rect x="1957" y="50" width="15.5" height="15" fill="#f4f4f4" stroke="#555"/>
<path d="M1964.7 39V55" stroke="#000" stroke-width="2"/>
<path d="M1959.5 45L1964.7 38L1970 45" fill="none" stroke="#000" stroke-width="2"/>

<!-- toolbar labels -->
<text class="te" x="14" y="83" textLength="38.3" lengthAdjust="spacingAndGlyphs">Insert</text>
<text class="tb" x="132" y="83" textLength="40.8" lengthAdjust="spacingAndGlyphs">Group</text>
<text class="te" x="187.5" y="83" textLength="58" lengthAdjust="spacingAndGlyphs">Ungroup</text>
<text class="tb" x="325" y="83" textLength="96.5" lengthAdjust="spacingAndGlyphs">Create Symbol</text>
<text class="te" x="532.5" y="83" textLength="27.5" lengthAdjust="spacingAndGlyphs">25%</text>
<text class="tb" x="673.5" y="83" textLength="24.8" lengthAdjust="spacingAndGlyphs">Edit</text>
<text class="tb" x="716.8" y="83" textLength="68.2" lengthAdjust="spacingAndGlyphs">Transform</text>
<text class="tb" x="799.7" y="83" textLength="42.8" lengthAdjust="spacingAndGlyphs">Rotate</text>
<text class="tb" x="856.5" y="83" textLength="45.3" lengthAdjust="spacingAndGlyphs">Flatten</text>
<text class="tb" x="982" y="83" textLength="34.6" lengthAdjust="spacingAndGlyphs">Mask</text>
<text class="te" x="1030.6" y="83" textLength="33.2" lengthAdjust="spacingAndGlyphs">Scale</text>
<text class="tb" x="1144.8" y="83" textLength="38.9" lengthAdjust="spacingAndGlyphs">Union</text>
<text class="tb" x="1197.7" y="83" textLength="56.1" lengthAdjust="spacingAndGlyphs">Subtract</text>
<text class="tb" x="1268.5" y="83" textLength="57.4" lengthAdjust="spacingAndGlyphs">Intersect</text>
<text class="tb" x="1340.6" y="83" textLength="68.2" lengthAdjust="spacingAndGlyphs">Difference</text>
<text class="tb" x="1488.5" y="83" textLength="54.2" lengthAdjust="spacingAndGlyphs">Forward</text>
<text class="tb" x="1556.8" y="83" textLength="63.2" lengthAdjust="spacingAndGlyphs">Backward</text>
<text class="te" x="1700.3" y="83" textLength="40.7" lengthAdjust="spacingAndGlyphs">Mirror</text>
<text class="te" x="1825.9" y="83" textLength="31.1" lengthAdjust="spacingAndGlyphs">View</text>
<text class="te" x="1942.6" y="83" textLength="42.1" lengthAdjust="spacingAndGlyphs">Export</text>
</svg>
</body></html>
